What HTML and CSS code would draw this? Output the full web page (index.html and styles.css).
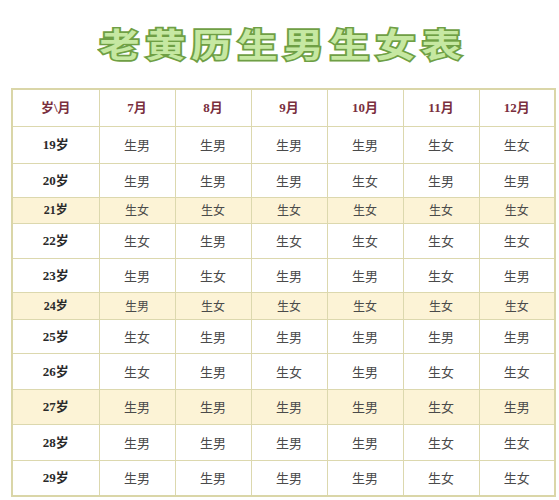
FILE: index.html
```html
<!DOCTYPE html>
<html lang="zh">
<head>
<meta charset="utf-8">
<title>老黄历生男生女表</title>
<link rel="stylesheet" href="styles.css">
</head>
<body>
<div class="page">
  <h1 class="title"><span class="title-text">老黄历生男生女表</span></h1>
  <table class="chart">
    <colgroup>
      <col class="c-age"><col class="c-m"><col class="c-m"><col class="c-m"><col class="c-m"><col class="c-m"><col class="c-m">
    </colgroup>
    <tr class="head h37"><th>岁\月</th><th>7月</th><th>8月</th><th>9月</th><th>10月</th><th>11月</th><th>12月</th></tr>
    <tr class="h37"><td class="age">19岁</td><td>生男</td><td>生男</td><td>生男</td><td>生男</td><td>生女</td><td>生女</td></tr>
    <tr class="h34"><td class="age">20岁</td><td>生男</td><td>生男</td><td>生男</td><td>生女</td><td>生男</td><td>生男</td></tr>
    <tr class="hl h26"><td class="age">21岁</td><td>生女</td><td>生女</td><td>生女</td><td>生女</td><td>生女</td><td>生女</td></tr>
    <tr class="h35"><td class="age">22岁</td><td>生女</td><td>生男</td><td>生女</td><td>生女</td><td>生女</td><td>生女</td></tr>
    <tr class="h34"><td class="age">23岁</td><td>生男</td><td>生女</td><td>生男</td><td>生男</td><td>生女</td><td>生男</td></tr>
    <tr class="hl h27"><td class="age">24岁</td><td>生男</td><td>生女</td><td>生女</td><td>生女</td><td>生女</td><td>生女</td></tr>
    <tr class="h34"><td class="age">25岁</td><td>生女</td><td>生男</td><td>生男</td><td>生男</td><td>生男</td><td>生男</td></tr>
    <tr class="h36"><td class="age">26岁</td><td>生女</td><td>生男</td><td>生女</td><td>生男</td><td>生女</td><td>生女</td></tr>
    <tr class="hl big h35"><td class="age">27岁</td><td>生男</td><td>生男</td><td>生男</td><td>生男</td><td>生女</td><td>生男</td></tr>
    <tr class="h36"><td class="age">28岁</td><td>生男</td><td>生男</td><td>生男</td><td>生男</td><td>生女</td><td>生女</td></tr>
    <tr class="h36"><td class="age">29岁</td><td>生男</td><td>生男</td><td>生男</td><td>生男</td><td>生女</td><td>生女</td></tr>
  </table>
</div>
</body>
</html>
```
FILE: styles.css
```css
html, body {
  margin: 0;
  padding: 0;
  background: #ffffff;
}
.page {
  width: 559px;
  height: 500px;
  overflow: hidden;
  font-family: "Noto Sans CJK SC", "Noto Sans", sans-serif;
}
.title {
  margin: 0;
  height: 88px;
  display: flex;
  align-items: center;
  justify-content: center;
  padding-left: 2px;
  box-sizing: border-box;
}
.title-text {
  display: inline-block;
  font-family: "Noto Sans CJK SC", sans-serif;
  font-weight: 700;
  font-size: 40px;
  letter-spacing: 6px;
  color: #c6e8a2;
  -webkit-text-stroke: 4px #6f9f45;
  paint-order: stroke fill;
  transform: scaleY(0.82);
  margin-top: -2px;
  margin-right: -6px;
}
.chart {
  margin-left: 11px;
  border-collapse: collapse;
  table-layout: fixed;
  width: 545px;
  border: 2px solid #dad6a8;
}
.c-age { width: 87px; }
.c-m { width: 76px; }
.chart th, .chart td {
  border: 1px solid #dcd8ae;
  padding: 0;
  text-align: center;
  vertical-align: middle;
  font-size: 13px;
  color: #4a4a4a;
  line-height: 1;
}
.chart th {
  font-family: "Liberation Serif", "Noto Sans CJK SC", serif;
  font-weight: 700;
  font-size: 13px;
  color: #7a2f3e;
}
.chart td.age {
  font-family: "Liberation Serif", "Noto Sans CJK SC", serif;
  font-weight: 700;
  font-size: 13px;
  color: #2a2a2a;
}
.hl td {
  background: #fcf3d6;
  font-size: 12px;
}
.hl td.age { font-size: 12px; }
.hl.big td { font-size: 13px; }
.h37 { height: 37px; }
.h36 { height: 36px; }
.h35 { height: 35px; }
.h34 { height: 34px; }
.h27 { height: 27px; }
.h26 { height: 26px; }
```
